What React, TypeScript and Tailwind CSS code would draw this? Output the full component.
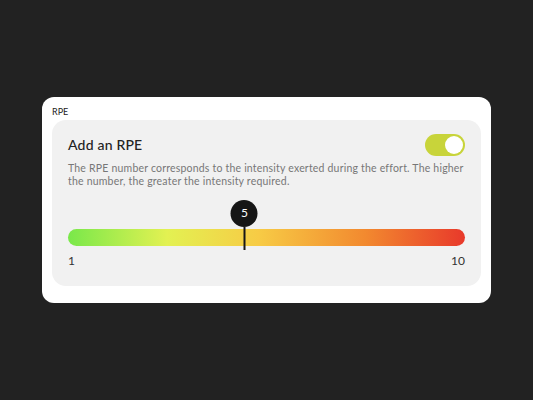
import React from 'react';

export default function App() {
  const value = 5;
  const pct = ((value - 1) / 9) * 100;

  return (
    <div
      className="flex h-[400px] w-[533px] items-center justify-center bg-[#222222]"
      style={{ fontFamily: 'Lato, "Noto Sans", sans-serif' }}
    >
      <div className="mt-[-1px] w-[449px] rounded-[12px] bg-white px-[10px] pb-[17px] pt-[9px]">
        <div className="text-[9px] leading-[11px] text-[#222]">RPE</div>
        <div className="mt-[3px] rounded-[14px] bg-[#f1f1f1] px-[16px] pb-[18px] pt-[14px]">
          <div className="flex items-center justify-between">
            <span className="text-[14px] font-medium tracking-[0.2px] text-[#222]">Add an RPE</span>
            <div className="flex h-[22px] w-[40px] items-center justify-end rounded-full bg-[#c8d43a] px-[2px]">
              <div className="h-[18px] w-[18px] rounded-full bg-white" />
            </div>
          </div>
          <p className="mt-[6px] text-[10.5px] leading-[13.5px] tracking-[0.2px] text-[#777]">
            The RPE number corresponds to the intensity exerted during the effort. The higher
            the number, the greater the intensity required.
          </p>

          <div className="relative mt-[40px] h-[17px] rounded-full bg-[linear-gradient(90deg,#79e84a_0%,#e3f152_25%,#f7cb45_48%,#f2892f_75%,#e8392b_100%)]">
            <div
              className="absolute bottom-[-4px] flex -translate-x-1/2 flex-col items-center"
              style={{ left: `${pct}%` }}
            >
              <div className="flex h-[27px] w-[27px] items-center justify-center rounded-full bg-[#161616] text-[12px] text-white">
                {value}
              </div>
              <div className="h-[23px] w-[2px] bg-[#161616]" />
            </div>
          </div>

          <div className="mt-[8px] flex justify-between text-[12px] leading-[14px] text-[#333]">
            <span>1</span>
            <span>10</span>
          </div>
        </div>
      </div>
    </div>
  );
}
